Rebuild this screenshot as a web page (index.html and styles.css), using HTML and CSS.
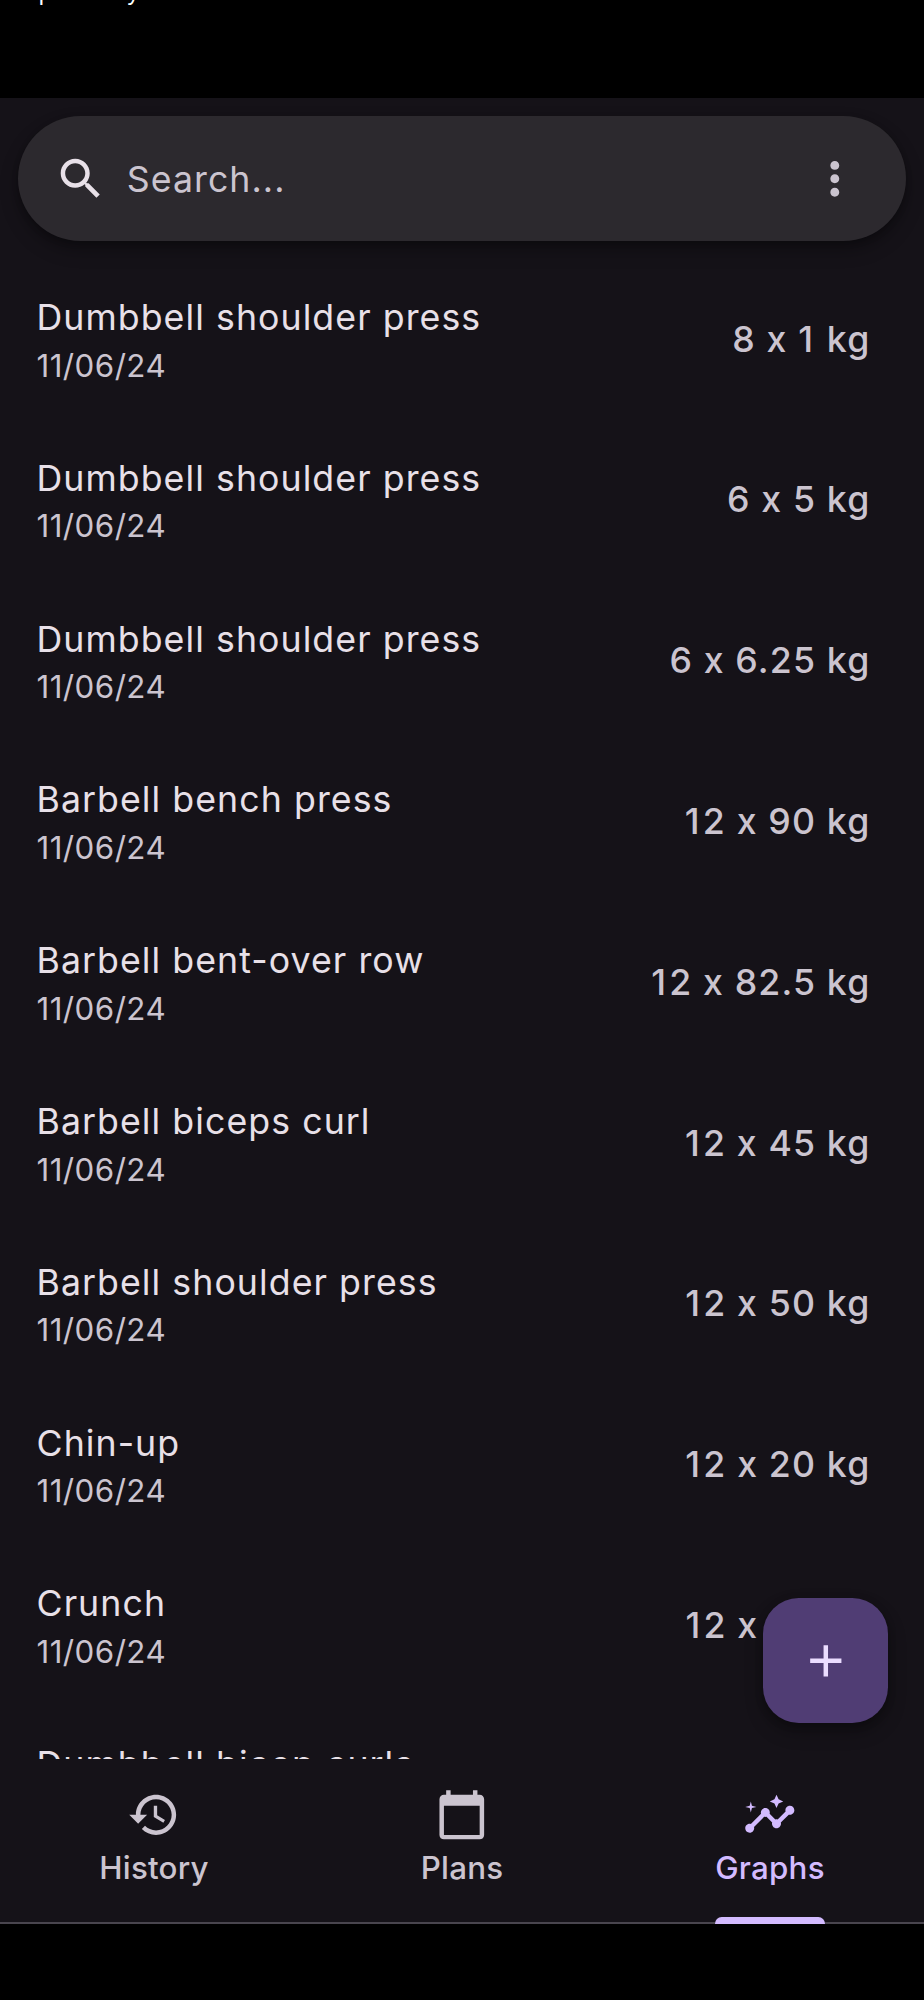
FILE: index.html
```html
<!DOCTYPE html>
<html lang="en">
<head>
<meta charset="utf-8">
<title>Graphs</title>
<link rel="stylesheet" href="styles.css">
</head>
<body>
<div class="screen">
  <header class="caption"><span class="caption-text">Graph history</span></header>
  <main class="app">
    <div class="search">
      <svg class="icon search-icon" viewBox="0 0 24 24"><path d="M15.5 14h-.79l-.28-.27C15.41 12.59 16 11.11 16 9.5 16 5.91 13.09 3 9.5 3S3 5.91 3 9.5 5.91 16 9.5 16c1.61 0 3.09-.59 4.23-1.57l.27.28v.79l5 4.99L20.49 19l-4.99-5zm-6 0C7.01 14 5 11.99 5 9.5S7.01 5 9.5 5 14 7.01 14 9.5 11.99 14 9.5 14z"/></svg>
      <span class="placeholder">Search...</span>
      <svg class="icon" viewBox="0 0 24 24"><path d="M12 8c1.1 0 2-.9 2-2s-.9-2-2-2-2 .9-2 2 .9 2 2 2zm0 2c-1.1 0-2 .9-2 2s.9 2 2 2 2-.9 2-2-.9-2-2-2zm0 6c-1.1 0-2 .9-2 2s.9 2 2 2 2-.9 2-2-.9-2-2-2z"/></svg>
    </div>
    <ul class="list">
      <li class="row"><div><div class="name">Dumbbell shoulder press</div><div class="date">11/06/24</div></div><div class="value">8 x <span class="one">1</span> kg</div></li>
      <li class="row"><div><div class="name">Dumbbell shoulder press</div><div class="date">11/06/24</div></div><div class="value">6 x 5 kg</div></li>
      <li class="row"><div><div class="name">Dumbbell shoulder press</div><div class="date">11/06/24</div></div><div class="value">6 x 6.25 kg</div></li>
      <li class="row"><div><div class="name">Barbell bench press</div><div class="date">11/06/24</div></div><div class="value"><span class="one">1</span>2 x 90 kg</div></li>
      <li class="row"><div><div class="name">Barbell bent-over row</div><div class="date">11/06/24</div></div><div class="value"><span class="one">1</span>2 x 82.5 kg</div></li>
      <li class="row"><div><div class="name">Barbell biceps curl</div><div class="date">11/06/24</div></div><div class="value"><span class="one">1</span>2 x 45 kg</div></li>
      <li class="row"><div><div class="name">Barbell shoulder press</div><div class="date">11/06/24</div></div><div class="value"><span class="one">1</span>2 x 50 kg</div></li>
      <li class="row"><div><div class="name">Chin-up</div><div class="date">11/06/24</div></div><div class="value"><span class="one">1</span>2 x 20 kg</div></li>
      <li class="row"><div><div class="name">Crunch</div><div class="date">11/06/24</div></div><div class="value"><span class="one">1</span>2 x 24 kg</div></li>
      <li class="row"><div><div class="name">Dumbbell bicep curls</div><div class="date">11/06/24</div></div></li>
    </ul>
    <button class="fab" aria-label="Add"><svg class="icon" viewBox="0 0 24 24"><path d="M19 13h-6v6h-2v-6H5v-2h6V5h2v6h6v2z"/></svg></button>
  </main>
  <nav class="tabs">
    <div class="tab"><div class="tab-body">
      <svg class="icon" viewBox="0 0 24 24"><path d="M13 3c-4.97 0-9 4.03-9 9H1l3.89 3.89.07.14L9 12H6c0-3.87 3.13-7 7-7s7 3.13 7 7-3.13 7-7 7c-1.93 0-3.68-.79-4.94-2.06l-1.42 1.42C8.27 19.99 10.51 21 13 21c4.97 0 9-4.03 9-9s-4.03-9-9-9zm-1 5v5l4.28 2.54.72-1.21-3.5-2.08V8H12z"/></svg>
      <span class="label">History</span></div></div>
    <div class="tab"><div class="tab-body">
      <svg class="icon" viewBox="0 0 24 24"><path d="M20 3h-1V1h-2v2H7V1H5v2H4c-1.1 0-2 .9-2 2v16c0 1.1.9 2 2 2h16c1.1 0 2-.9 2-2V5c0-1.1-.9-2-2-2zm0 18H4V8h16v13z"/></svg>
      <span class="label">Plans</span></div></div>
    <div class="tab"><div class="tab-body active">
      <svg class="icon" viewBox="0 0 24 24"><path d="M21 8c-1.45 0-2.26 1.44-1.93 2.51l-3.55 3.56c-.3-.09-.74-.09-1.04 0l-2.55-2.55C12.27 10.45 11.46 9 10 9c-1.45 0-2.27 1.44-1.93 2.52l-4.56 4.55C2.44 15.74 1 16.55 1 18c0 1.1.9 2 2 2 1.45 0 2.26-1.44 1.93-2.51l4.55-4.56c.3.09.74.09 1.04 0l2.55 2.55C12.73 16.55 13.54 18 15 18c1.45 0 2.27-1.44 1.93-2.52l3.56-3.55C21.56 12.26 23 11.45 23 10c0-1.1-.9-2-2-2z"/><path d="M15 9l.94-2.07L18 6l-2.06-.93L15 3l-.92 2.07L12 6l2.08.93z"/><path d="M3.5 11L4 9l2-.5L4 8l-.5-2L3 8l-2 .5L3 9z"/></svg>
      <span class="label">Graphs</span></div></div>
  </nav>
</div>
</body>
</html>
```
FILE: styles.css
```css
* { box-sizing: border-box; }
body { margin: 0; background: #000; font-family: Inter, "Liberation Sans", sans-serif; }
.screen { width: 924px; height: 2000px; display: flex; flex-direction: column; overflow: hidden; }
.caption { height: 98px; flex: none; overflow: hidden; }
.caption-text { display: block; margin-top: -20px; font-family: "Liberation Sans", sans-serif; font-size: 23.2px; line-height: 24px; color: #fff; }
.app { height: 1660.5px; flex: none; position: relative; overflow: hidden; background: #151218; padding-top: 18px; }
.icon { width: 53.6px; height: 53.6px; fill: currentColor; display: block; flex: none; }
.search { height: 125px; margin: 0 18px; padding: 0 44.7px 0 35.7px; display: flex; align-items: center; border-radius: 63px; background: #2c292e; color: #cbc4cf; box-shadow: 0 9px 18px rgba(0,0,0,.3), 0 2px 6px rgba(0,0,0,.2); }
.search-icon { color: #e8e0e8; }
.placeholder { flex: 1; padding-left: 19.5px; font-size: 35.7px; letter-spacing: 1.05px; }
.list { list-style: none; margin: 18px 0 0; padding: 0; }
.row { height: 160.8px; padding: 0 53.6px 0 36.5px; display: flex; align-items: center; justify-content: space-between; }
.name { font-size: 35.7px; line-height: 53.6px; letter-spacing: 1.06px; color: #e8e0e8; white-space: nowrap; }
.date { margin-top: -1px; font-size: 31.3px; line-height: 44px; letter-spacing: .45px; color: #cbc4cf; }
.value { font-size: 35.7px; line-height: 53.6px; font-weight: 500; letter-spacing: 1.15px; color: #cbc4cf; white-space: nowrap; }
.one { letter-spacing: 3.2px; }
.fab { position: absolute; right: 36px; bottom: 35.5px; width: 125px; height: 125px; padding: 0; border: 0; border-radius: 35.7px; display: grid; place-items: center; background: #503d74; color: #ebddff; box-shadow: 0 9px 18px rgba(0,0,0,.3), 0 2px 8px rgba(0,0,0,.2); }
.tabs { height: 165.5px; flex: none; display: grid; grid-template-columns: repeat(3, 1fr); background: #151218; border-bottom: 2px solid #49454e; color: #cbc4cf; }
.tab { display: flex; justify-content: center; height: 165.5px; }
.tab-body { display: flex; flex-direction: column; align-items: center; padding-top: 29.5px; position: relative; }
.label { margin-top: 4.2px; font-size: 31.3px; line-height: 44.7px; font-weight: 500; letter-spacing: .22px; }
.active { color: #d3bbff; }
.active::after { content: ""; position: absolute; left: 0; right: 0; bottom: 0; height: 6.7px; border-radius: 6.7px 6.7px 0 0; background: #d3bbff; }
```
